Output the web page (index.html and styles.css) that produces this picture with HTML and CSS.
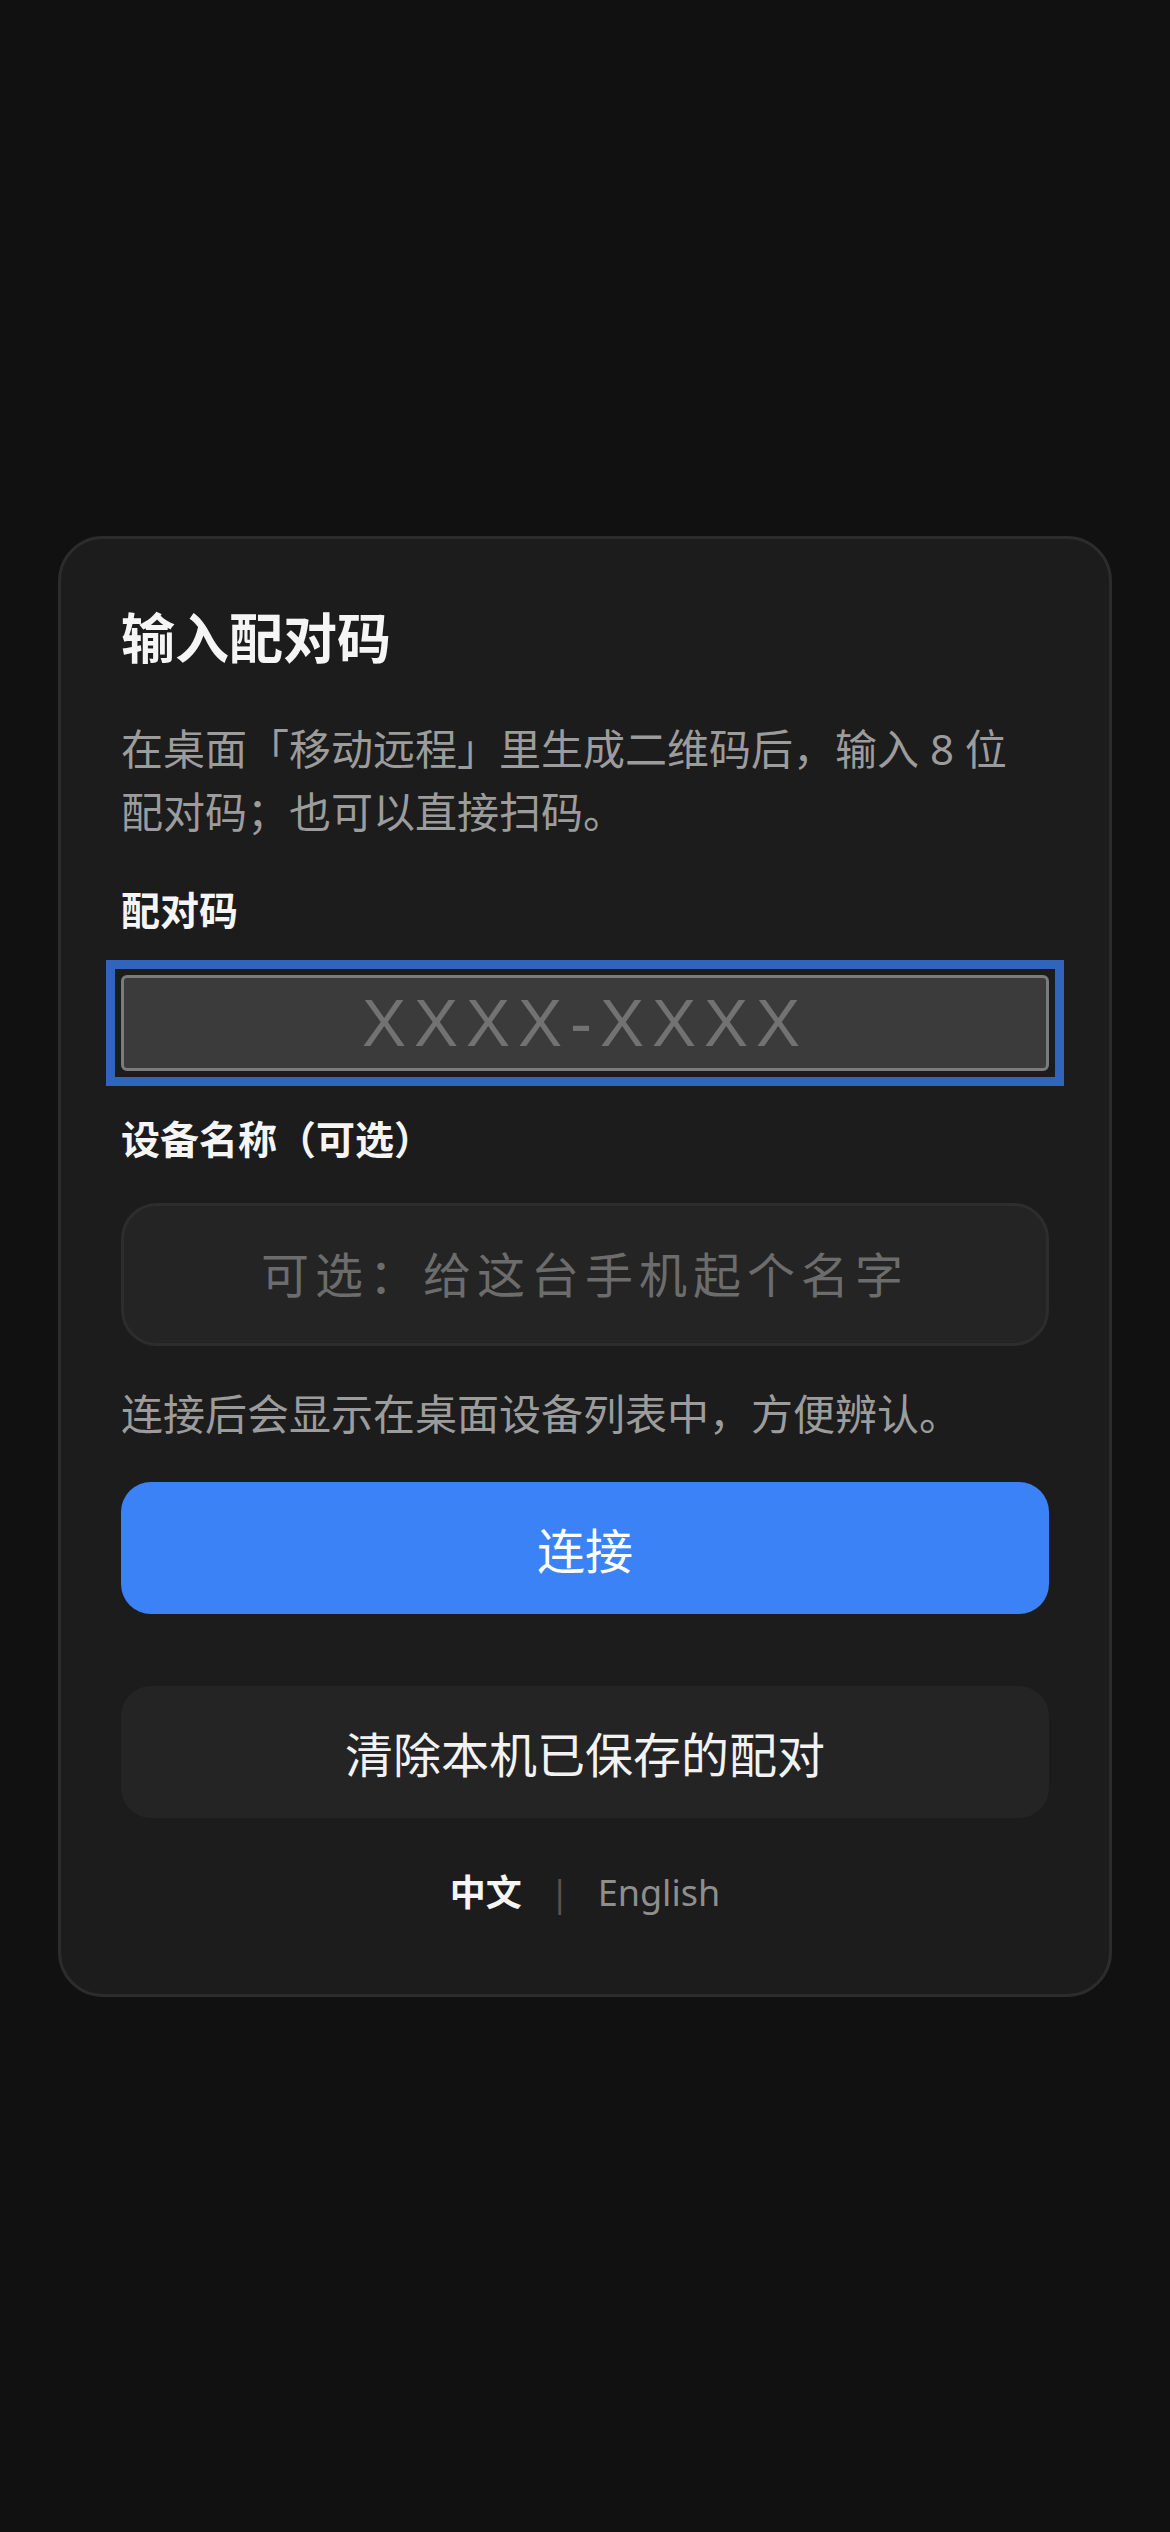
FILE: index.html
```html
<!DOCTYPE html>
<html lang="zh-CN">
<head>
<meta charset="utf-8">
<title>输入配对码</title>
<link rel="stylesheet" href="styles.css">
</head>
<body>
<main class="page">
  <section class="card">
    <h1 class="title">输入配对码</h1>
    <p class="desc">在桌面「移动远程」里生成二维码后，输入 8 位<br>配对码；也可以直接扫码。</p>
    <label class="label label-code" for="code">配对码</label>
    <div class="code-focus">
      <input id="code" class="code-input" type="text" placeholder="XXXX-XXXX">
    </div>
    <label class="label label-name" for="name">设备名称（可选）</label>
    <input id="name" class="name-input" type="text" placeholder="可选：给这台手机起个名字">
    <p class="hint">连接后会显示在桌面设备列表中，方便辨认。</p>
    <button class="btn btn-primary" type="button">连接</button>
    <button class="btn btn-secondary" type="button">清除本机已保存的配对</button>
    <div class="lang">
      <span class="lang-item lang-active">中文</span>
      <span class="lang-sep">|</span>
      <span class="lang-item">English</span>
    </div>
  </section>
</main>
</body>
</html>
```

FILE: styles.css
```css
* {
  box-sizing: border-box;
}

html, body {
  margin: 0;
  padding: 0;
  background: #111111;
}

body {
  font-family: "Noto Sans", "Noto Sans CJK SC", sans-serif;
  color: #f5f5f5;
}

.page {
  min-height: 2532px;
  display: flex;
  align-items: center;
  justify-content: center;
  padding: 0 58px;
}

.card {
  width: 100%;
  display: flex;
  flex-direction: column;
  background: #1c1c1c;
  border: 3px solid #2c2c2c;
  border-radius: 45px;
  padding: 60px 60px 74px;
}

.title {
  margin: 0 0 40px;
  font-size: 54px;
  line-height: 78px;
  font-weight: 700;
  color: #f5f5f5;
}

.desc {
  margin: 0 0 38px;
  font-size: 42px;
  line-height: 63px;
  color: #9c9c9c;
}

.label {
  display: block;
  font-size: 39px;
  line-height: 58px;
  font-weight: 700;
  color: #f5f5f5;
  margin-bottom: 36px;
}

.label-name {
  margin-top: 39px;
  margin-bottom: 35px;
}

.code-focus {
  margin: -15px -15px;
  padding: 6px;
  border: 9px solid #3164bd;
  background: #1c1c1c;
}

.code-input {
  display: block;
  width: 100%;
  height: 96px;
  margin: 0;
  background: #3b3b3b;
  border: 3px solid #7b7b7b;
  border-radius: 6px;
  outline: none;
  font-family: "Liberation Sans", "Noto Sans", sans-serif;
  font-size: 66px;
  letter-spacing: 8px;
  text-align: center;
  color: #eeeeee;
  padding: 0;
}

.code-input::placeholder {
  color: #727272;
}

.name-input {
  width: 100%;
  height: 143px;
  margin: 0;
  background: #242424;
  border: 3px solid #2d2d2d;
  border-radius: 36px;
  outline: none;
  font-family: "Noto Sans", "Noto Sans CJK SC", sans-serif;
  font-size: 48px;
  letter-spacing: 6px;
  text-align: center;
  color: #eeeeee;
  padding: 0;
}

.name-input::placeholder {
  color: #6c6c6c;
}

.hint {
  margin: 36px 0 37px;
  font-size: 42px;
  line-height: 63px;
  color: #9c9c9c;
}

.btn {
  width: 100%;
  height: 132px;
  margin: 0;
  border: none;
  border-radius: 30px;
  font-family: "Noto Sans", "Noto Sans CJK SC", sans-serif;
  font-size: 48px;
  font-weight: 400;
  color: #ffffff;
  padding: 0;
}

.btn-primary {
  background: #3b82f6;
}

.btn-secondary {
  margin-top: 72px;
  background: #242424;
  color: #f2f2f2;
}

.lang {
  margin-top: 48px;
  display: flex;
  justify-content: center;
  align-items: center;
  gap: 28px;
  font-size: 36px;
  line-height: 54px;
}

.lang-item {
  color: #8e8e8e;
}

.lang-active {
  color: #f5f5f5;
  font-weight: 700;
}

.lang-sep {
  color: #555555;
}
```
